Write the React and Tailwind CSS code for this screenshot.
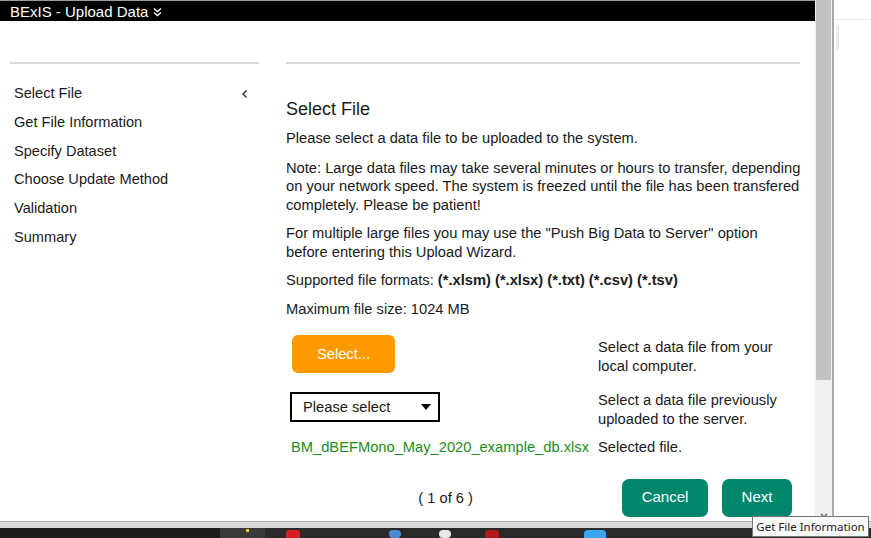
import React from 'react';

const steps = [
  'Select File',
  'Get File Information',
  'Specify Dataset',
  'Choose Update Method',
  'Validation',
  'Summary',
];

// tops of the taskbar icons peeking up at the bottom edge
const taskIcons = [
  { left: 286, w: 14, color: 'bg-[#d42020]', round: 'rounded-t-[3px]' },
  { left: 389, w: 12, color: 'bg-[#4a8ad6]', round: 'rounded-full' },
  { left: 439, w: 12, color: 'bg-[#e8e8e8]', round: 'rounded-full' },
  { left: 485, w: 14, color: 'bg-[#b01818]', round: 'rounded-t-[3px]' },
  { left: 584, w: 22, color: 'bg-[#3ba4f0]', round: 'rounded-t-[4px]' },
];

export default function App() {
  return (
    <div className="relative w-[871px] h-[538px] overflow-hidden bg-white font-['Liberation_Sans',Arial,sans-serif] text-[#1a1a1a]">
      <div className="flex h-[521px]">
        {/* browser window content */}
        <div className="w-[815px] shrink-0 flex flex-col">
          <div className="h-[21px] border-t border-[#9a9a9a] bg-black text-white text-[15px] leading-[19px] pl-[10px] flex items-center">
            BExIS - Upload Data
            <svg className="ml-[5px] mt-[1px]" width="9" height="10" viewBox="0 0 9 10" fill="none" stroke="white" strokeWidth="1.4">
              <path d="M1 1.5 L4.5 4.5 L8 1.5" />
              <path d="M1 5.5 L4.5 8.5 L8 5.5" />
            </svg>
          </div>

          <div className="flex pt-[41px]">
            {/* wizard steps */}
            <div className="w-[249px] ml-[10px] shrink-0">
              <div className="h-[2px] bg-[#d9d9d9]" />
              <ul className="mt-[16px] text-[14.6px]">
                {steps.map((s, i) => (
                  <li key={s} className="h-[28.7px] flex items-center justify-between pl-[4px] pr-[10px]">
                    <span>{s}</span>
                    {i === 0 && (
                      <svg width="8" height="10" viewBox="0 0 8 10" fill="none" stroke="#222" strokeWidth="1.3">
                        <path d="M5.5 1.5 L2 5 L5.5 8.5" />
                      </svg>
                    )}
                  </li>
                ))}
              </ul>
            </div>

            {/* step content */}
            <div className="w-[514px] ml-[27px] shrink-0">
              <div className="h-[2px] bg-[#d9d9d9]" />
              <h2 className="mt-[34px] text-[18px] leading-[22px]">Select File</h2>
              <div className="w-[530px] mt-[9px] text-[14.7px] leading-[18.5px] whitespace-nowrap">
                <p className="mb-[11px]">Please select a data file to be uploaded to the system.</p>
                <p className="mb-[10px]">
                  Note: Large data files may take several minutes or hours to transfer, depending<br />
                  on your network speed. The system is freezed until the file has been transfered<br />
                  completely. Please be patient!
                </p>
                <p className="mb-[10px]">
                  For multiple large files you may use the "Push Big Data to Server" option<br />
                  before entering this Upload Wizard.
                </p>
                <p className="mb-[10px]">
                  Supported file formats: <b>(*.xlsm) (*.xlsx) (*.txt) (*.csv) (*.tsv)</b>
                </p>
                <p>Maximum file size: 1024 MB</p>

                <div className="w-[514px] mt-[17px] ml-[4px] grid grid-cols-[308px_1fr]">
                  <div className="pl-[2px]">
                    <button className="w-[103px] h-[38px] rounded-[6px] bg-[#ff9900] text-white text-[14.7px]">
                      Select...
                    </button>
                  </div>
                  <div className="mt-[3px] leading-[19px]">
                    Select a data file from your<br />local computer.
                  </div>

                  <div className="mt-[16px]">
                    <div className="w-[150px] h-[30px] border-2 border-black flex items-center justify-between pl-[11px] pr-[7px]">
                      <span>Please select</span>
                      <svg width="10" height="6" viewBox="0 0 10 6">
                        <path d="M0 0 H10 L5 6 Z" fill="black" />
                      </svg>
                    </div>
                  </div>
                  <div className="mt-[15px]">
                    Select a data file previously<br />uploaded to the server.
                  </div>

                  <div className="mt-[10px] pl-[1px] text-[#1e8c1e]">BM_dBEFMono_May_2020_example_db.xlsx</div>
                  <div className="mt-[10px]">Selected file.</div>
                </div>

                <div className="w-[514px] mt-[22px] flex items-center">
                  <div className="w-[187px] mt-[2px] text-right">( 1 of 6 )</div>
                  <div className="ml-auto mr-[8px] flex gap-[14px]">
                    <button className="w-[86px] h-[38px] rounded-[7px] bg-[#00876b] text-white text-[15px]">Cancel</button>
                    <button className="w-[70px] h-[38px] rounded-[7px] bg-[#00876b] text-white text-[15px]">Next</button>
                  </div>
                </div>
              </div>
            </div>
          </div>
        </div>

        {/* scrollbar */}
        <div className="w-[17px] shrink-0 bg-[#f0f0f0] flex flex-col">
          <div className="h-[380px] mx-[1px] bg-[#c2c2c2]" />
          <div className="flex-1" />
          <div className="h-[12px] flex justify-center items-center">
            <svg width="8" height="5" viewBox="0 0 8 5" fill="none" stroke="#555" strokeWidth="1.2">
              <path d="M1 1 L4 4 L7 1" />
            </svg>
          </div>
        </div>
        <div className="w-[2px] shrink-0 bg-[#a8a8a8]" />

        {/* area beside the window */}
        <div className="flex-1 bg-white">
          <div className="h-[20px] border-b border-[#ececec]" />
          <div className="ml-[2px] mt-[5px] w-[3px] h-[25px] bg-[#ececec]" />
        </div>
      </div>

      {/* bottom edge + taskbar */}
      <div className="h-[1px] bg-[#a8a8a8]" />
      <div className="h-[6px] bg-[#d9d9d9]" />
      <div className="relative h-[10px] flex">
        <div className="w-[220px] bg-[#1c1c1c]" />
        <div className="w-[45px] bg-[#3a3a3a]" />
        <div className="flex-1 bg-[#2a2a2a]" />
        {taskIcons.map((t, i) => (
          <div
            key={i}
            className={`absolute top-[2px] h-[8px] ${t.color} ${t.round}`}
            style={{ left: t.left, width: t.w }}
          />
        ))}
        <div className="absolute left-[246px] top-[1px] w-[3px] h-[3px] bg-[#f0d000]" />
      </div>

      {/* tooltip */}
      <div className="absolute left-[752px] top-[516px] w-[117px] h-[21px] border border-[#767676] bg-[#f9f9f9] text-[11.5px] leading-[19px] text-[#222] text-center whitespace-nowrap font-['Noto_Sans',sans-serif]">
        Get File Information
      </div>
    </div>
  );
}
